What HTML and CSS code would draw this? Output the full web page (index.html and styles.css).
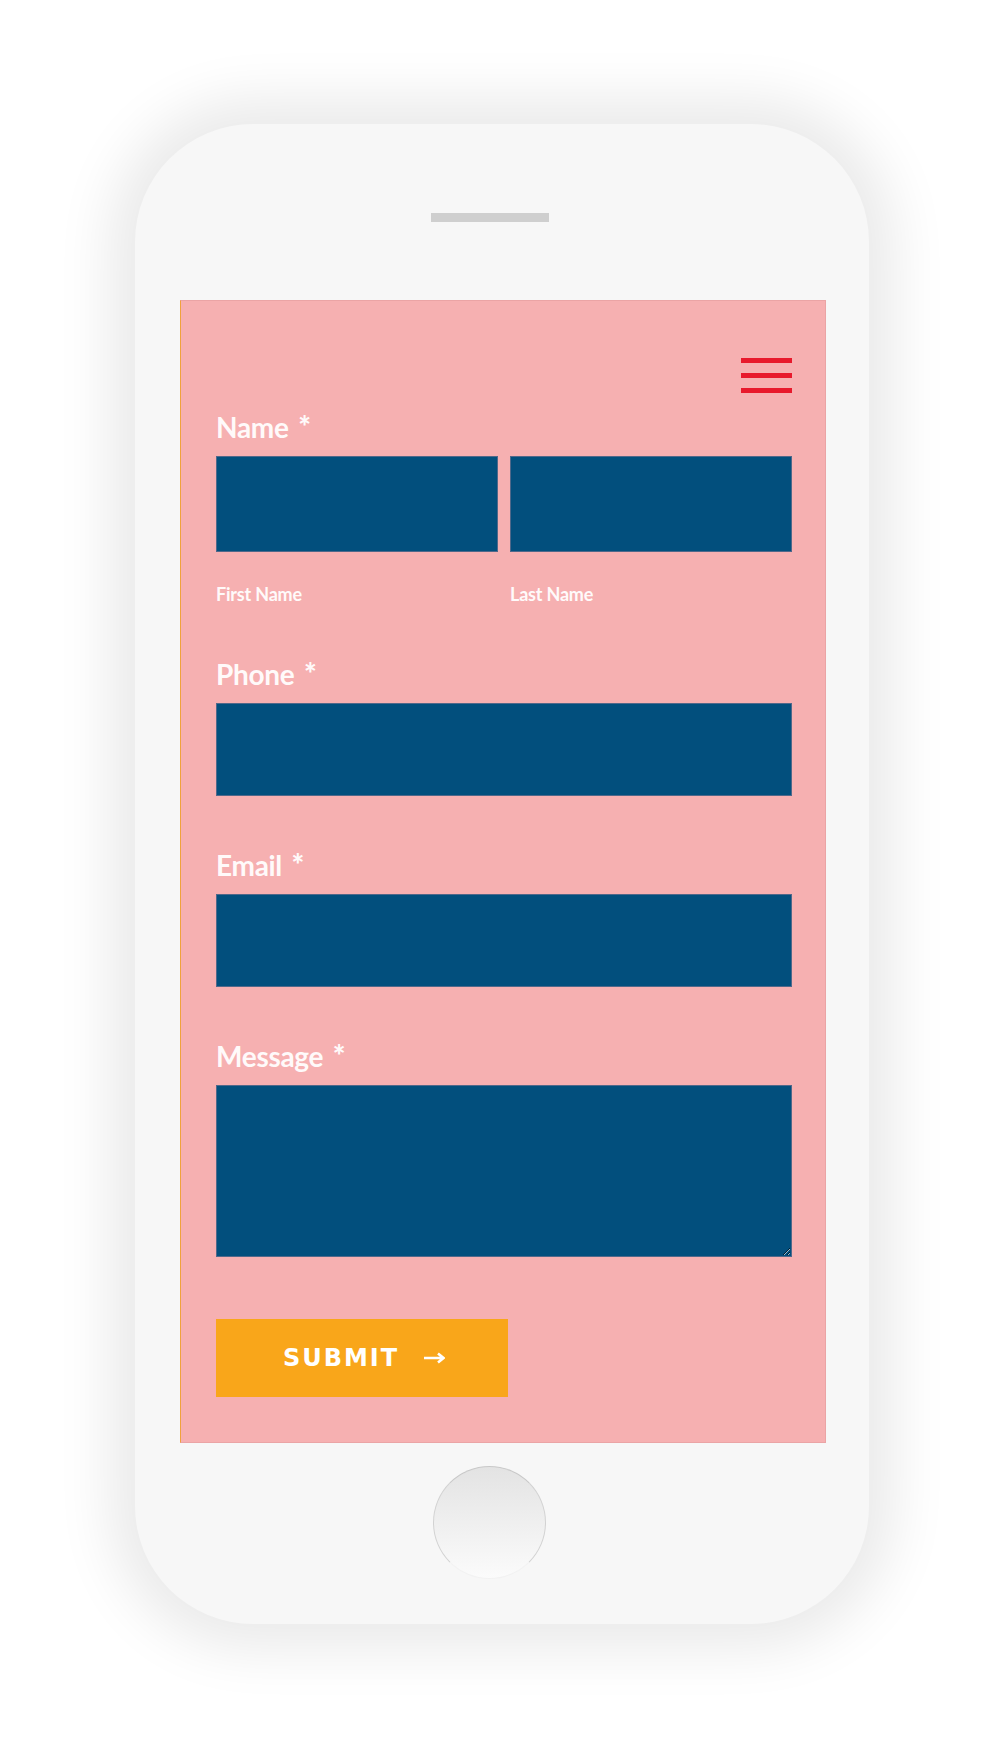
FILE: index.html
```html
<!DOCTYPE html>
<html lang="en">
<head>
<meta charset="utf-8">
<title>Contact form</title>
<link rel="stylesheet" href="styles.css">
</head>
<body>
<div class="phone">
  <div class="speaker"></div>
  <div class="screen">
    <div class="header">
      <div class="burger"><span></span><span></span><span></span></div>
    </div>
    <form class="form">
      <div class="field">
        <label class="label">Name <span class="req">*</span></label>
        <div class="row">
          <div class="col">
            <input class="input" type="text">
            <span class="sub">First Name</span>
          </div>
          <div class="col">
            <input class="input" type="text">
            <span class="sub">Last Name</span>
          </div>
        </div>
      </div>
      <div class="field">
        <label class="label">Phone <span class="req">*</span></label>
        <input class="input short" type="text">
      </div>
      <div class="field">
        <label class="label">Email <span class="req">*</span></label>
        <input class="input short" type="text">
      </div>
      <div class="field">
        <label class="label">Message <span class="req">*</span></label>
        <textarea class="input area"></textarea>
      </div>
      <button class="submit" type="button"><span class="submit-text">SUBMIT</span><svg class="arrow" width="22" height="12" viewBox="0 0 22 12"><path d="M1 6H20M15 1.5L20.5 6L15 10.5" fill="none" stroke="#fff" stroke-width="2.6"/></svg></button>
    </form>
  </div>
  <div class="home"></div>
</div>
</body>
</html>
```
FILE: styles.css
```css
html, body {
  margin: 0;
  padding: 0;
  background: #ffffff;
}
body {
  width: 1000px;
  height: 1750px;
  overflow: hidden;
  font-family: "Lato", "Liberation Sans", sans-serif;
}
.phone {
  box-sizing: border-box;
  margin: 124px 0 0 135px;
  width: 734px;
  height: 1500px;
  padding-top: 89px;
  background: #f7f7f7;
  border-radius: 118px;
  box-shadow: 0 0 55px 25px rgba(0, 0, 0, 0.085);
  display: flex;
  flex-direction: column;
}
.speaker {
  width: 118px;
  height: 9px;
  margin-left: 296px;
  background: #cfcfcf;
}
.screen {
  box-sizing: border-box;
  margin: 78px 0 0 45px;
  width: 646px;
  height: 1143px;
  background: #f6b0b1;
  border: 1px solid #eba4a5;
  border-left-color: #f0a23c;
  display: flex;
  flex-direction: column;
}
.header {
  display: flex;
  justify-content: flex-end;
  padding: 57px 33px 0 0;
}
.burger {
  width: 51px;
  height: 35px;
  display: flex;
  flex-direction: column;
  justify-content: space-between;
}
.burger span {
  display: block;
  height: 5px;
  background: #e8192c;
}
.form {
  padding: 19px 33px 0 35px;
  display: flex;
  flex-direction: column;
}
.field {
  display: flex;
  flex-direction: column;
}
.field + .field {
  margin-top: 54px;
}
.label {
  font-size: 28px;
  line-height: 30px;
  font-weight: 700;
  color: #fffafa;
  margin-bottom: 14px;
  letter-spacing: -0.3px;
}
.req {
  display: inline-block;
  margin-left: 3px;
  font-size: 30px;
  font-weight: 900;
  vertical-align: top;
  line-height: 28px;
}
.row {
  display: flex;
  gap: 12px;
}
.col {
  flex: 1;
  display: flex;
  flex-direction: column;
}
.input {
  box-sizing: border-box;
  display: block;
  width: 100%;
  margin: 0;
  background: #024f7d;
  border: 1px solid #50688a;
  border-radius: 0;
  outline: none;
  height: 96px;
  font-family: inherit;
  font-size: 18px;
  color: #fff;
  padding: 0 12px;
}
.input.short {
  height: 93px;
}
.input.area {
  height: 172px;
  resize: vertical;
}
.sub {
  margin-top: 31px;
  font-size: 18px;
  line-height: 22px;
  font-weight: 700;
  color: #fffafa;
  letter-spacing: -0.2px;
}
.submit {
  margin-top: 62px;
  width: 292px;
  height: 78px;
  background: #f9a61a;
  border: none;
  border-radius: 0;
  padding: 0 0 0 4px;
  display: flex;
  align-items: center;
  justify-content: center;
  gap: 24px;
  cursor: pointer;
}
.submit-text {
  font-family: "DejaVu Sans", "Liberation Sans", sans-serif;
  font-weight: 700;
  font-size: 24px;
  letter-spacing: 2px;
  color: #ffffff;
  line-height: 1;
}
.arrow {
  display: block;
}
.home {
  box-sizing: border-box;
  margin: 23px 0 0 298px;
  width: 113px;
  height: 113px;
  border-radius: 50%;
  border: 1.5px solid #c8c8c8;
  border-bottom-color: #f2f2f2;
  border-left-color: #d2d2d2;
  border-right-color: #d2d2d2;
  background: linear-gradient(#e3e3e3, #fbfbfb);
}
```
